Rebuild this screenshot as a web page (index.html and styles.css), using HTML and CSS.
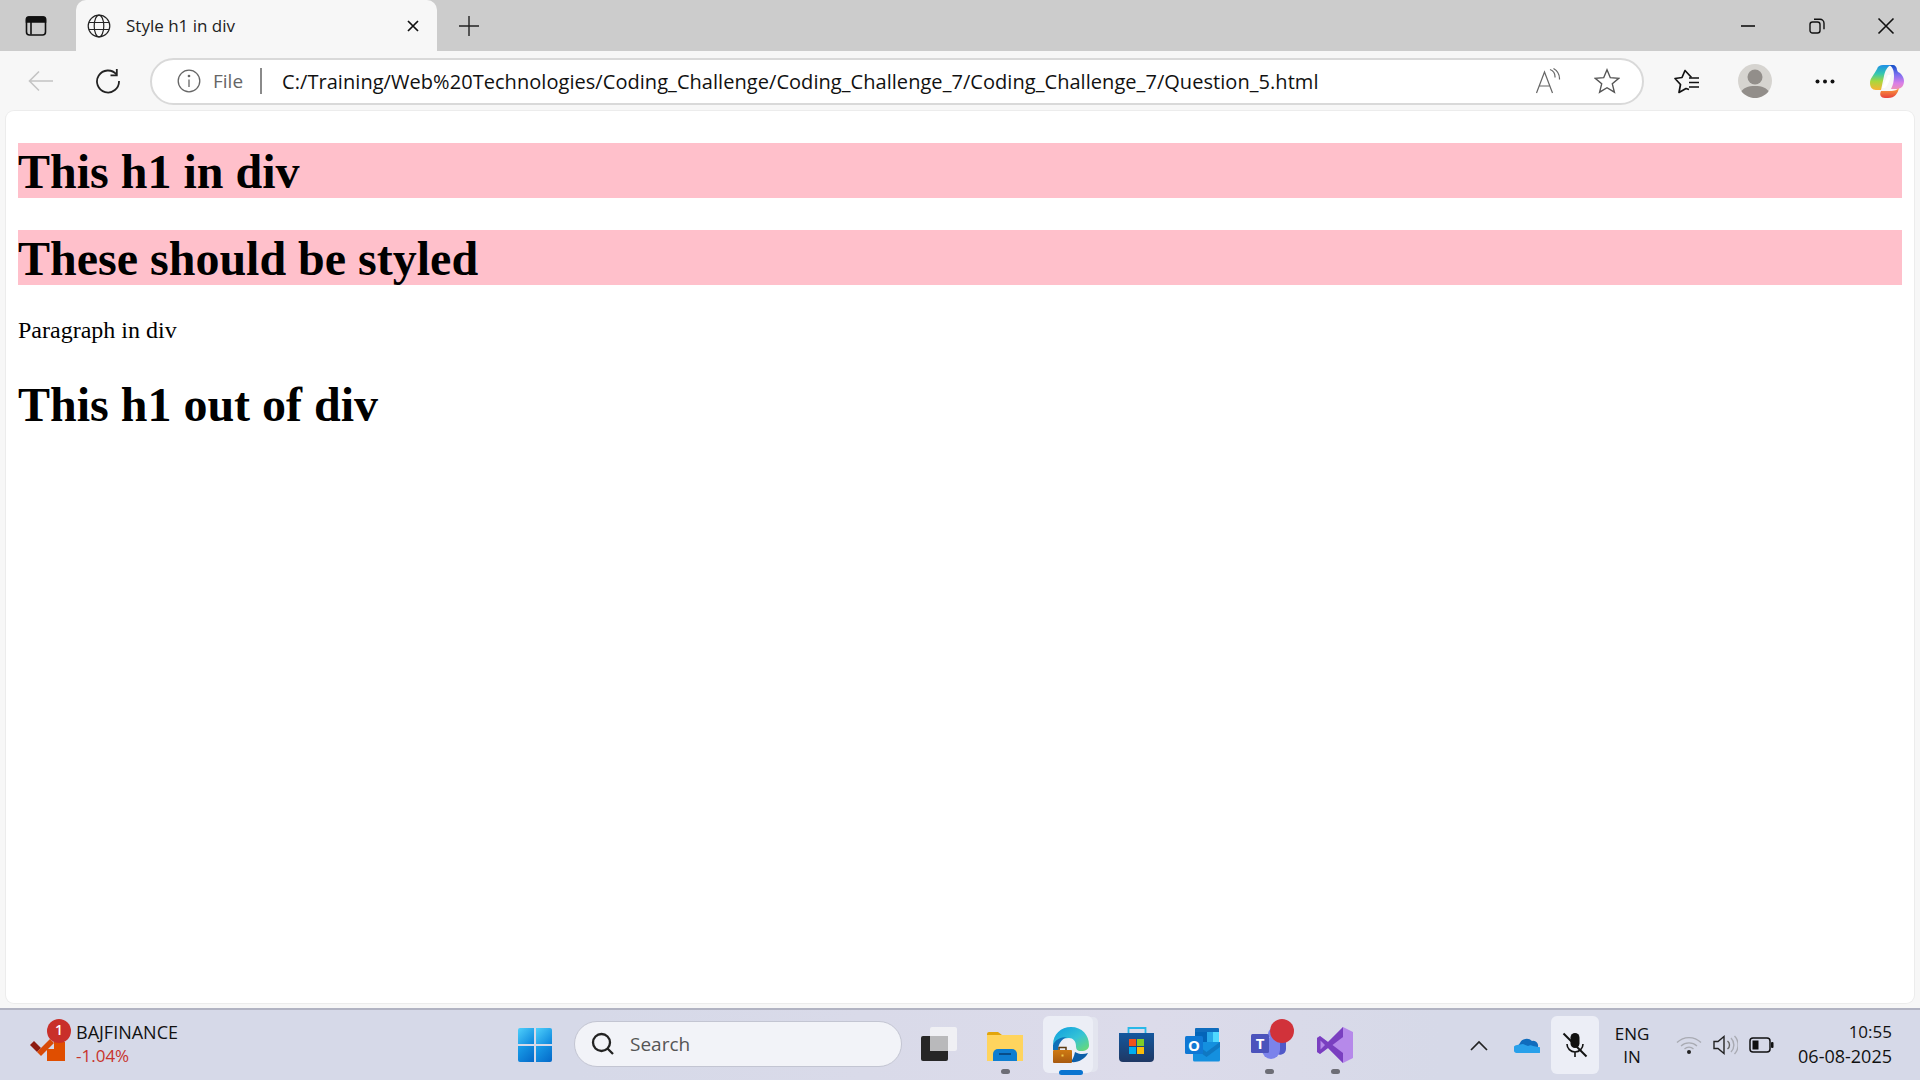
FILE: index.html
```html
<!DOCTYPE html>
<html lang="en">
<head>
    <meta charset="UTF-8">
    <title>Style h1 in div</title>
    <link rel="stylesheet" href="styles.css">
</head>
<body>
    <!-- Browser tabs -->
    <header class="tabbar">
        <div class="tab-side">
            <svg width="22" height="22" viewBox="0 0 22 22" fill="none" stroke="#111" stroke-width="1.6"><rect x="1.5" y="2" width="19" height="18" rx="3"/><path d="M1.5 3.5 a2 2 0 0 1 2-1.5 h15 a2 2 0 0 1 2 1.5 V7 H1.5 z" fill="#111"/><path d="M6 7 v12.500"/></svg>
        </div>
        <div class="tab">
            <svg class="tab-globe" width="24" height="24" viewBox="0 0 24 24" fill="none" stroke="#222" stroke-width="1.200"><circle cx="12" cy="12" r="10.800"/><ellipse cx="12" cy="12" rx="4.800" ry="10.800"/><path d="M2 8.500 h20 M2 15.500 h20"/></svg>
            <span class="tab-title">Style h1 in div</span>
            <svg class="tab-close" width="14" height="14" viewBox="0 0 14 14" stroke="#111" stroke-width="1.700"><path d="M2 2 L12 12 M12 2 L2 12"/></svg>
        </div>
        <div class="tab-new">
            <svg width="22" height="22" viewBox="0 0 22 22" stroke="#222" stroke-width="1.400"><path d="M11 1 V21 M1 11 H21"/></svg>
        </div>
        <div class="window-controls">
            <div class="window-btn"><svg width="16" height="16" viewBox="0 0 16 16" stroke="#111" stroke-width="1.600"><path d="M1 8 H15"/></svg></div>
            <div class="window-btn"><svg width="16" height="16" viewBox="0 0 16 16" fill="none" stroke="#111" stroke-width="1.400"><rect x="1" y="4" width="10" height="11" rx="2.500"/><path d="M5 1.200 h6 a4 4 0 0 1 4 4 v6"/></svg></div>
            <div class="window-btn"><svg width="18" height="18" viewBox="0 0 18 18" stroke="#111" stroke-width="1.600"><path d="M1.500 1.500 L16.500 16.500 M16.500 1.500 L1.500 16.500"/></svg></div>
        </div>
    </header>

    <!-- Address bar row -->
    <nav class="toolbar">
        <div class="nav-btn">
            <svg width="26" height="22" viewBox="0 0 26 22" fill="none" stroke="#c4c4c4" stroke-width="1.600"><path d="M25 11 H1.500 M11 1.500 L1.500 11 L11 20.500"/></svg>
        </div>
        <div class="nav-btn">
            <svg width="26" height="26" viewBox="0 0 26 26" fill="none" stroke="#222" stroke-width="1.800"><path d="M21.500 6.500 A11 11 0 1 0 24 13"/><path d="M21.800 1 V7.300 H15.500"/></svg>
        </div>
        <div class="address">
            <svg class="address-info" width="24" height="24" viewBox="0 0 24 24" fill="none" stroke="#666" stroke-width="1.300"><circle cx="12" cy="12" r="10.800"/><path d="M12 10.500 V18"/><circle cx="12" cy="7" r=".7" fill="#666"/></svg>
            <span class="address-scheme">File</span>
            <span class="address-sep"></span>
            <span class="address-url">C:/Training/Web%20Technologies/Coding_Challenge/Coding_Challenge_7/Coding_Challenge_7/Question_5.html</span>
            <svg class="address-read" width="26" height="26" viewBox="0 0 26 26" fill="none" stroke="#666" stroke-width="1.200"><path d="M1.500 25 L9.500 4 L17.500 25 M4.500 18 H14.500"/><path d="M15 1.500 a8 8 0 0 1 5 8 M18.500 0.500 a12 12 0 0 1 6 11"/></svg>
            <svg class="address-star" width="26" height="26" viewBox="0 0 26 26" fill="none" stroke="#555" stroke-width="1.400"><path d="M13 1.800 L16.300 9.700 L24.800 10.300 L18.300 15.800 L20.400 24.200 L13 19.700 L5.600 24.200 L7.700 15.800 L1.200 10.300 L9.700 9.700 Z"/></svg>
        </div>
        <div class="toolbar-icons">
            <div class="tool-btn tool-fav">
                <svg width="26" height="25" viewBox="0 0 26 25" fill="none" stroke="#111" stroke-width="1.700" stroke-linejoin="round"><path d="M17.500 8.500 L11 1.500 L8 8.500 L1 9.500 L6.500 15.500 L5 23.500 L12 19.500 L15 20.500"/><path d="M15 9 H25 M15 13.500 H25 M15 18 H25"/></svg>
            </div>
            <div class="tool-btn tool-profile">
                <svg width="34" height="34" viewBox="0 0 34 34"><circle cx="17" cy="17" r="17" fill="#d6d4d0"/><circle cx="17" cy="13" r="7.500" fill="#928e8a"/><path d="M3.500 27.500 C5 24 10 22 17 22 C24 22 29 24 30.500 27.500 C27 31.500 22 34 17 34 C12 34 7 31.500 3.500 27.500 Z" fill="#928e8a"/></svg>
            </div>
            <div class="tool-btn tool-more">
                <svg width="20" height="5" viewBox="0 0 20 5" fill="#111"><circle cx="2.500" cy="2.500" r="2"/><circle cx="10" cy="2.500" r="2"/><circle cx="17.500" cy="2.500" r="2"/></svg>
            </div>
            <div class="tool-btn tool-copilot">
                <svg width="34" height="35" viewBox="0 0 34 35">
                    <defs>
                        <linearGradient id="copA" x1="0" y1="0" x2="0" y2="1"><stop offset="0" stop-color="#1f8fe8"/><stop offset=".35" stop-color="#35c8b0"/><stop offset=".65" stop-color="#a8d83c"/><stop offset="1" stop-color="#f9b233"/></linearGradient>
                        <linearGradient id="copB" x1="0" y1="0" x2="0" y2="1"><stop offset="0" stop-color="#0f4fc8"/><stop offset=".4" stop-color="#7a6ff0"/><stop offset=".75" stop-color="#d87ee8"/><stop offset="1" stop-color="#ee8fb8"/></linearGradient>
                        <linearGradient id="copC" x1="0" y1="0" x2="0" y2="1"><stop offset="0" stop-color="#f9a13c"/><stop offset="1" stop-color="#e8423c"/></linearGradient>
                    </defs>
                    <path d="M7 5 C8 2 10 1 13 1 H21 C17 3 15 7 14 12 L11 26 H6 C2 26 0 23 0 19 C0 14 4 11 7 5 Z" fill="url(#copA)"/>
                    <path d="M19 1 H23 C25 1 27 3 27 6 L28 8 C31 9 34 13 34 17 C34 23 30 25 27 25 H21 C23 21 24 17 24 12 C24 7 23 3 19 1 Z" fill="url(#copB)"/>
                    <path d="M11 27 H20 C25 27 27 26 29 24 C28 29 25 34 18 34 H15 C11 34 9 31 11 27 Z" fill="url(#copC)"/>
                    <path d="M18 11 H21 C20 16 18 21 15 24 H12 C14 20 16 15 18 11 Z" fill="#fff"/>
                </svg>
            </div>
        </div>
    </nav>

    <!-- The page itself -->
    <main class="page">
        <div class="styled-box">
            <h1>This h1 in div</h1>
            <h1>These should be styled</h1>
            <p>Paragraph in div</p>
        </div>
        <h1 class="plain">This h1 out of div</h1>
    </main>

    <!-- Windows taskbar -->
    <footer class="taskbar">
        <div class="stock">
            <div class="stock-icon">
                <svg width="36" height="36" viewBox="0 0 36 36"><path d="M0 17 L4 13 L11 20 L7 24 Z" fill="#8c1a10"/><path d="M7 24 L11 20 L20 11 L24 15 L11 28 Z" fill="#d84a08"/><path d="M17 21 L24 21 L24 14 L35 14 L35 33 L17 33 Z" fill="#e04e00"/></svg>
                <span class="stock-badge">1</span>
            </div>
            <div class="stock-text">
                <span class="stock-name">BAJFINANCE</span>
                <span class="stock-change">-1.04%</span>
            </div>
        </div>

        <div class="task-cell">
            <svg width="36" height="36" viewBox="0 0 36 36">
                <defs>
                    <linearGradient id="winA" x1="0" y1="0" x2="1" y2="1"><stop offset="0" stop-color="#4fd0fb"/><stop offset="1" stop-color="#0a84dc"/></linearGradient>
                    <linearGradient id="winB" x1="0" y1="0" x2="1" y2="1"><stop offset="0" stop-color="#1aa0ea"/><stop offset="1" stop-color="#0468c8"/></linearGradient>
                </defs>
                <path d="M1 3 a2 2 0 0 1 2-2 H17 V17 H1 Z" fill="url(#winA)"/>
                <path d="M19 1 H33 a2 2 0 0 1 2 2 V17 H19 Z" fill="url(#winA)"/>
                <path d="M1 19 H17 V35 H3 a2 2 0 0 1-2-2 Z" fill="url(#winB)"/>
                <path d="M19 19 H35 V33 a2 2 0 0 1-2 2 H19 Z" fill="url(#winB)"/>
            </svg>
        </div>

        <div class="search">
            <svg width="24" height="24" viewBox="0 0 24 24" fill="none" stroke="#222" stroke-width="2.300"><circle cx="10.500" cy="10.500" r="8.500"/><path d="M16.500 16.500 L22 22"/></svg>
            <span>Search</span>
        </div>

        <div class="task-apps">
            <div class="task-cell">
                <svg width="36" height="36" viewBox="0 0 36 36"><rect x="0" y="9" width="27" height="25" rx="2" fill="#262626"/><rect x="9" y="0" width="27" height="24" rx="2" fill="#f4f4f6" fill-opacity=".82"/><rect x="9" y="9" width="18" height="15" fill="#b9b9bb"/></svg>
            </div>
            <div class="task-cell">
                <svg width="36" height="34" viewBox="0 0 36 34"><path d="M0 6 a2 2 0 0 1 2-2 H11 L15 7 H34 a2 2 0 0 1 2 2 V14 H0 Z" fill="#e2a50c"/><path d="M0 7 H36 V33 H0 Z" fill="#ffd45e"/><path d="M6 33 V26 a5 5 0 0 1 5-5 H25 a5 5 0 0 1 5 5 V33 Z" fill="#0f7ed0"/><path d="M12 26 H24" stroke="#073e70" stroke-width="1.500"/></svg>
                <span class="task-dot"></span>
            </div>
            <div class="task-cell task-active">
                <svg width="38" height="38" viewBox="0 0 38 38">
                    <defs>
                        <linearGradient id="edgeA" x1="0" y1="0" x2="1" y2="1"><stop offset="0" stop-color="#0c9ce0"/><stop offset=".55" stop-color="#35c3d6"/><stop offset="1" stop-color="#6fdc6a"/></linearGradient>
                        <linearGradient id="edgeB" x1="0" y1="0" x2="0" y2="1"><stop offset="0" stop-color="#cf7a12"/><stop offset="1" stop-color="#a85a10"/></linearGradient>
                    </defs>
                    <path d="M1 19 C1 8 9 1 19 1 C30 1 37 9 37 19 C37 23 34 25 29 25 C25 25 24 23 24 20 C24 15 21 12 17 12 C10 12 5 15 1 19 Z" fill="url(#edgeA)"/>
                    <path d="M1 19 C3 14 8 11 15 11 C9 13 6 19 6 24 L1 24 Z" fill="#0f70b8"/>
                    <circle cx="18" cy="19" r="5" fill="#eef0f7"/>
                    <path d="M19 36 C26 37 33 33 36 27 C31 29 26 28 23 26 C22 31 20 34 19 36 Z" fill="#0d5fa8"/>
                    <rect x="1" y="24" width="19" height="13" rx="1" fill="url(#edgeB)"/>
                    <path d="M7 24 V21.500 H14 V24" fill="none" stroke="#5c3a10" stroke-width="1.500"/>
                    <rect x="9.500" y="28.500" width="2" height="2" fill="#f2c94c"/>
                </svg>
                <span class="task-bar"></span>
            </div>
            <div class="task-cell">
                <svg width="36" height="36" viewBox="0 0 36 36">
                    <defs><linearGradient id="storeA" x1="0" y1="0" x2="0" y2="1"><stop offset="0" stop-color="#14589e"/><stop offset="1" stop-color="#1f3864"/></linearGradient></defs>
                    <path d="M9.500 6 V1 H26.500 V6" fill="none" stroke="#28b8e8" stroke-width="1.800"/>
                    <path d="M0 6 H35 V31 a4 4 0 0 1-4 4 H4 a4 4 0 0 1-4-4 Z" fill="url(#storeA)"/>
                    <rect x="10" y="12" width="7" height="7" fill="#f1511b"/><rect x="18" y="12" width="7" height="7" fill="#80cc28"/>
                    <rect x="10" y="20" width="7" height="7" fill="#00adef"/><rect x="18" y="20" width="7" height="7" fill="#fbbc09"/>
                </svg>
            </div>
            <div class="task-cell">
                <svg width="36" height="34" viewBox="0 0 36 34">
                    <rect x="10" y="0" width="24" height="16" rx="1" fill="#0f6cbd"/>
                    <rect x="22" y="4" width="12" height="10" fill="#28a8ea"/><rect x="28" y="4" width="6" height="10" fill="#50d9ff"/><rect x="10" y="4" width="12" height="10" fill="#0364b8"/>
                    <path d="M8 14 H35 V32 a1.500 1.500 0 0 1-1.500 1.500 H9.500 A1.500 1.500 0 0 1 8 32 Z" fill="#1490df"/>
                    <path d="M8 14 L21.500 24 L35 14 V19 L21.500 29 L8 19 Z" fill="#0a5fa8" fill-opacity=".5"/>
                    <rect x="0" y="8" width="18" height="18" rx="1.500" fill="#0f78d4"/>
                    <text class="app-letter" x="9" y="22.500" text-anchor="middle">O</text>
                </svg>
            </div>
            <div class="task-cell">
                <svg width="36" height="34" viewBox="0 0 36 34">
                    <circle cx="23" cy="6" r="6" fill="#7b83eb"/>
                    <path d="M24 10 H35 V21 a6 6 0 0 1-11 3 Z" fill="#5059c9"/>
                    <path d="M11 10 H29 V22 a9 9 0 0 1-18 0 Z" fill="#7b83eb"/>
                    <rect x="0" y="6" width="18" height="19" rx="1.500" fill="#4b53bc"/>
                    <text class="app-letter" x="9" y="21" text-anchor="middle">T</text>
                </svg>
                <span class="task-alert"></span>
                <span class="task-dot"></span>
            </div>
            <div class="task-cell">
                <svg width="36" height="36" viewBox="0 0 36 36"><path d="M26 0 L36 5 V31 L26 36 L11 21 L3 27 L0 25 V11 L3 9 L11 15 Z" fill="#b689ea"/><path d="M26 0 V36 L11 21 L3 27 L0 25 V11 L3 9 L11 15 Z M3.500 13.500 V22.500 L8 18 Z M26 10 L15.500 18 L26 26 Z" fill="#7a3fc0" fill-rule="evenodd"/></svg>
                <span class="task-dot"></span>
            </div>
        </div>

        <div class="tray">
            <div class="tray-cell">
                <svg width="18" height="11" viewBox="0 0 18 11" fill="none" stroke="#222" stroke-width="1.700"><path d="M1 10 L9 2 L17 10"/></svg>
            </div>
            <div class="tray-cell">
                <svg width="26" height="16" viewBox="0 0 26 16"><path d="M6 6 a7 6 0 0 1 12-2 a5 5 0 0 1 6 6 H3 Z" fill="#0f6cbd"/><path d="M4 16 a4 4 0 0 1-1-8 l6-1 l5 2 a5 5 0 0 1 5 0 l5 1 a3 3 0 0 1 1 6 Z" fill="#28a0ea"/></svg>
            </div>
            <div class="tray-cell tray-mic">
                <svg width="26" height="26" viewBox="0 0 26 26" fill="none" stroke="#111" stroke-width="1.600"><rect x="8.500" y="1" width="9" height="15" rx="4.500" fill="#111" stroke="none"/><path d="M5 12 a8 8 0 0 0 16 0 M13 20 V25"/><path d="M1.500 1.500 L24.500 24.500" stroke-width="2"/></svg>
            </div>
            <div class="tray-lang">
                <span>ENG</span>
                <span>IN</span>
            </div>
            <div class="tray-cell tray-small">
                <svg width="26" height="18" viewBox="0 0 26 18" fill="none" stroke="#a9abb3" stroke-width="1.300"><path d="M1 6.500 a17 17 0 0 1 24 0 M5 10 a12 12 0 0 1 16 0 M8.500 13 a6.500 6.500 0 0 1 9 0"/><circle cx="13" cy="16" r="2" fill="#222" stroke="none"/></svg>
            </div>
            <div class="tray-cell tray-small">
                <svg width="25" height="20" viewBox="0 0 25 20" fill="none" stroke="#222" stroke-width="1.400"><path d="M1 6.500 H5 L11 1.500 V18.500 L5 13.500 H1 Z"/><path d="M14.500 6 a5 5 0 0 1 0 8" stroke="#666"/><path d="M18 3 a10 10 0 0 1 0 14 M21.500 1 a13 13 0 0 1 0 18" stroke="#a9abb3"/></svg>
            </div>
            <div class="tray-cell tray-small">
                <svg width="25" height="16" viewBox="0 0 25 16"><rect x="1" y="1" width="20" height="14" rx="3" fill="none" stroke="#111" stroke-width="1.500"/><rect x="3.500" y="3.500" width="6" height="9" fill="#111"/><rect x="22" y="5" width="2.500" height="6" rx="1" fill="#111"/></svg>
            </div>
            <div class="clock">
                <span>10:55</span>
                <span class="clock-date">06-08-2025</span>
            </div>
        </div>
    </footer>
</body>
</html>
```

FILE: styles.css
```css
/* General Styling */
* {
    box-sizing: border-box;
}

body {
    margin: 0;
    height: 1080px;
    display: flex;
    flex-direction: column;
    overflow: hidden;
    background: #f7f7f7;
    font-family: "Open Sans", "Noto Sans", sans-serif;
    color: #111;
}

svg {
    display: block;
    flex: none;
}

/* Tab strip */
.tabbar {
    display: flex;
    align-items: stretch;
    height: 51px;
    background: #cccccc;
}

.tab-side {
    width: 76px;
    padding-right: 4px;
    display: flex;
    align-items: center;
    justify-content: center;
}

.tab {
    position: relative;
    width: 361px;
    display: flex;
    align-items: center;
    padding-left: 11px;
    background: #f7f7f7;
    border-radius: 10px 10px 0 0;
}

.tab-title {
    margin-left: 15px;
    font-size: 17px;
    color: #222;
}

.tab-close {
    margin-left: auto;
    margin-right: 17px;
}

.tab-new {
    width: 64px;
    display: flex;
    align-items: center;
    justify-content: center;
}

.window-controls {
    margin-left: auto;
    display: flex;
}

.window-btn {
    width: 69px;
    display: flex;
    align-items: center;
    justify-content: center;
}

/* Address bar row */
.toolbar {
    display: flex;
    align-items: center;
    height: 60px;
}

.nav-btn {
    width: 68px;
    display: flex;
    align-items: center;
    justify-content: center;
}

.nav-btn:first-child {
    width: 74px;
    padding-left: 7px;
}

.address {
    width: 1494px;
    height: 47px;
    margin-left: 8px;
    display: flex;
    align-items: center;
    padding: 0 22px 0 25px;
    background: #fff;
    border: 2px solid #d9d9d9;
    border-radius: 24px;
}

.address-scheme {
    margin-left: 12px;
    font-size: 19px;
    color: #666;
}

.address-sep {
    width: 2px;
    height: 26px;
    margin-left: 17px;
    background: #8a8a8a;
}

.address-url {
    margin-left: 20px;
    font-size: 20px;
    letter-spacing: 0.05px;
    white-space: nowrap;
    color: #111;
}

.address-read {
    margin-left: auto;
}

.address-star {
    margin-left: 33px;
}

.toolbar-icons {
    display: flex;
    align-items: center;
    margin-left: 10px;
}

.tool-btn {
    display: flex;
    align-items: center;
    justify-content: center;
    width: 68px;
}

.tool-fav { width: 66px; }
.tool-profile { width: 70px; }
.tool-more { width: 70px; }
.tool-copilot { width: 54px; }

/* Page content */
.page {
    flex: 1;
    display: flow-root;
    margin: 0 6px 5px;
    padding: 0 12px;
    background: #fff;
    border-radius: 8px;
    box-shadow: 0 0 0 1px #ececec;
    font-family: "Liberation Serif", "Times New Roman", serif;
    color: #000;
}

.page h1 {
    height: 55px;
    margin: 32px 0;
    padding-top: 1px;
    font-size: 48px;
    font-weight: bold;
}

.styled-box h1 {
    background: pink;
}

.page p {
    margin: 32px 0;
    font-size: 24px;
}

/* Taskbar */
.taskbar {
    display: flex;
    align-items: center;
    height: 72px;
    background: linear-gradient(90deg, #d6d9e8 30%, #dcdbea 60%, #d6d9e8 75%);
    border-top: 2px solid #b1b3c2;
}

.stock {
    width: 502px;
    display: flex;
    align-items: center;
    padding-left: 30px;
}

.stock-icon {
    position: relative;
    width: 36px;
    height: 36px;
    margin-top: 2px;
}

.stock-badge {
    position: absolute;
    top: -9px;
    right: -5px;
    width: 24px;
    height: 24px;
    border-radius: 50%;
    background: #c9302a;
    color: #fff;
    font-size: 14px;
    font-weight: 600;
    line-height: 22px;
    text-align: center;
}

.stock-text {
    display: flex;
    flex-direction: column;
    margin: -2px 0 0 10px;
    font-size: 18px;
    line-height: 24px;
}

.stock-change {
    font-size: 17px;
    color: #c8342c;
}

.task-cell {
    position: relative;
    width: 66px;
    height: 70px;
    display: flex;
    align-items: center;
    justify-content: center;
}

.search {
    width: 328px;
    height: 46px;
    margin: -2px 4px 0 6px;
    display: flex;
    align-items: center;
    padding-left: 16px;
    background: #f2f3f8;
    border: 1px solid #c3c5d2;
    border-radius: 23px;
    color: #555;
    font-size: 19px;
}

.search span {
    margin-left: 15px;
}

.task-apps {
    display: flex;
}

.task-dot,
.task-bar,
.task-alert {
    position: absolute;
    border-radius: 3px;
}

.task-dot {
    left: 29px;
    bottom: 6px;
    width: 9px;
    height: 5px;
    background: #6d6e76;
}

.task-active::before {
    content: "";
    position: absolute;
    left: 5px;
    top: 6px;
    width: 50px;
    height: 57px;
    background: #eceef6;
    border-radius: 6px;
    box-shadow: 6px 0 0 -1px #e3e5ef;
}

.task-active svg {
    position: relative;
}

.task-bar {
    left: 21px;
    bottom: 5px;
    width: 24px;
    height: 5px;
    background: #0a74d0;
}

.task-alert {
    top: 9px;
    left: 34px;
    width: 24px;
    height: 24px;
    border-radius: 50%;
    background: #d1323a;
}

.app-letter {
    fill: #fff;
    font-family: "Open Sans", sans-serif;
    font-size: 15px;
    font-weight: 700;
}

.tray {
    margin-left: auto;
    padding-right: 28px;
    display: flex;
    align-items: center;
}

.tray-cell {
    width: 48px;
    height: 58px;
    display: flex;
    align-items: center;
    justify-content: center;
}

.tray-small {
    width: 36px;
}

.tray-mic {
    background: #eceef6;
    border-radius: 6px;
}

.tray-lang {
    width: 66px;
    margin-right: 6px;
    display: flex;
    flex-direction: column;
    align-items: center;
    font-size: 17px;
    line-height: 23px;
}

.clock {
    width: 113px;
    margin-top: -2px;
    display: flex;
    flex-direction: column;
    align-items: flex-end;
    font-size: 17px;
    line-height: 24px;
}

.clock-date {
    font-size: 18px;
}
```
